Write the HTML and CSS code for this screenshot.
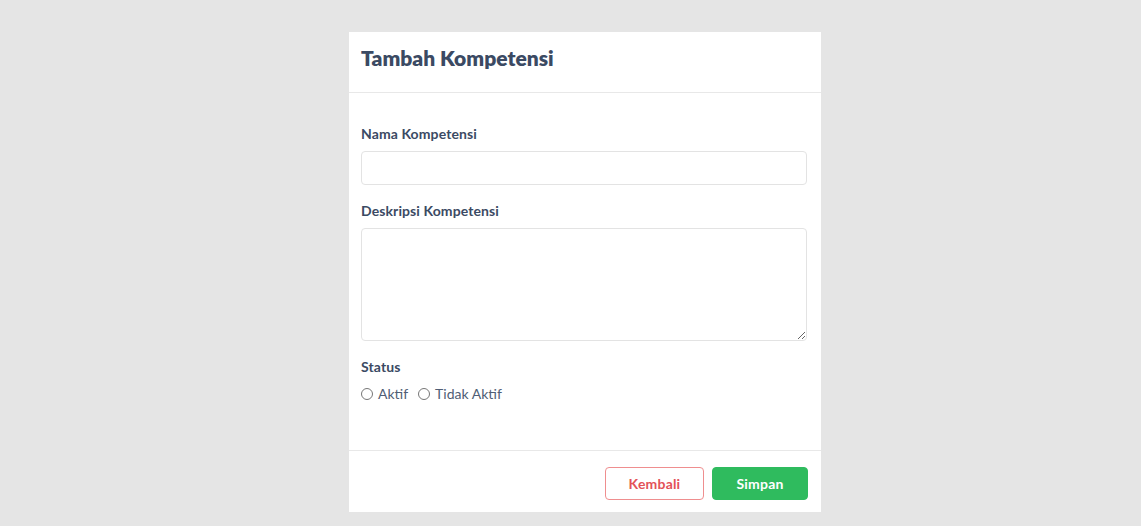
FILE: index.html
```html
<!DOCTYPE html>
<html lang="id">
<head>
<meta charset="utf-8">
<title>Tambah Kompetensi</title>
<link rel="stylesheet" href="styles.css">
</head>
<body>
<div class="page">
  <form class="card">
    <div class="card-header">
      <h1 class="title">Tambah Kompetensi</h1>
    </div>
    <div class="card-body">
      <div class="group">
        <label class="label" for="nama">Nama Kompetensi</label>
        <input class="input" id="nama" type="text">
      </div>
      <div class="group">
        <label class="label" for="desk">Deskripsi Kompetensi</label>
        <textarea class="input textarea" id="desk"></textarea>
      </div>
      <div class="group">
        <div class="label">Status</div>
        <div class="radios">
          <label class="radio"><input type="radio" name="status"><span>Aktif</span></label>
          <label class="radio"><input type="radio" name="status"><span>Tidak Aktif</span></label>
        </div>
      </div>
    </div>
    <div class="card-footer">
      <button type="button" class="btn btn-outline">Kembali</button>
      <button type="button" class="btn btn-green">Simpan</button>
    </div>
  </form>
</div>
</body>
</html>
```

FILE: styles.css
```css
* { box-sizing: border-box; }
html, body { margin: 0; padding: 0; }
body {
  background: #e5e5e5;
  font-family: "Lato", "Noto Sans", sans-serif;
  color: #3b4a63;
}
.page {
  padding: 32px 0 14px 349px;
}
.card {
  width: 472px;
  background: #fff;
  display: flex;
  flex-direction: column;
}
.card-header {
  height: 61px;
  padding: 0 12px 9px;
  display: flex;
  align-items: center;
  border-bottom: 1px solid #e8e8e8;
}
.title {
  margin: 0;
  font-size: 21px;
  font-weight: 800;
  color: #3b4a63;
}
.card-body {
  padding: 31px 14px 46px 12px;
  display: flex;
  flex-direction: column;
  gap: 16px;
}
.group {
  display: flex;
  flex-direction: column;
  gap: 7px;
}
.label {
  font-size: 14px;
  font-weight: 700;
  line-height: 20px;
  color: #3b4a63;
  letter-spacing: 0.1px;
}
.input {
  display: block;
  width: 100%;
  height: 34px;
  border: 1px solid #e3e3e3;
  border-radius: 4px;
  background: #fff;
  font: inherit;
  font-size: 14px;
  padding: 6px 10px;
}
.textarea {
  height: 113px;
  resize: vertical;
}
.radios {
  display: flex;
  gap: 10px;
  font-size: 14px;
  line-height: 20px;
  color: #4f5d75;
}
.radio {
  display: flex;
  align-items: center;
  gap: 5px;
}
.radio input {
  margin: 0;
  width: 12px;
  height: 12px;
}
.card-footer {
  border-top: 1px solid #e8e8e8;
  padding: 16px 13px 12px;
  display: flex;
  justify-content: flex-end;
  gap: 8px;
}
.btn {
  height: 33px;
  border-radius: 4px;
  font-family: inherit;
  font-size: 14px;
  font-weight: 700;
  letter-spacing: 0.2px;
  cursor: pointer;
}
.btn-outline {
  width: 99px;
  background: #fff;
  border: 1px solid #ef8e8f;
  color: #e35258;
}
.btn-green {
  width: 96px;
  background: #2fbb5e;
  border: 1px solid #2fbb5e;
  color: #fff;
}
```
